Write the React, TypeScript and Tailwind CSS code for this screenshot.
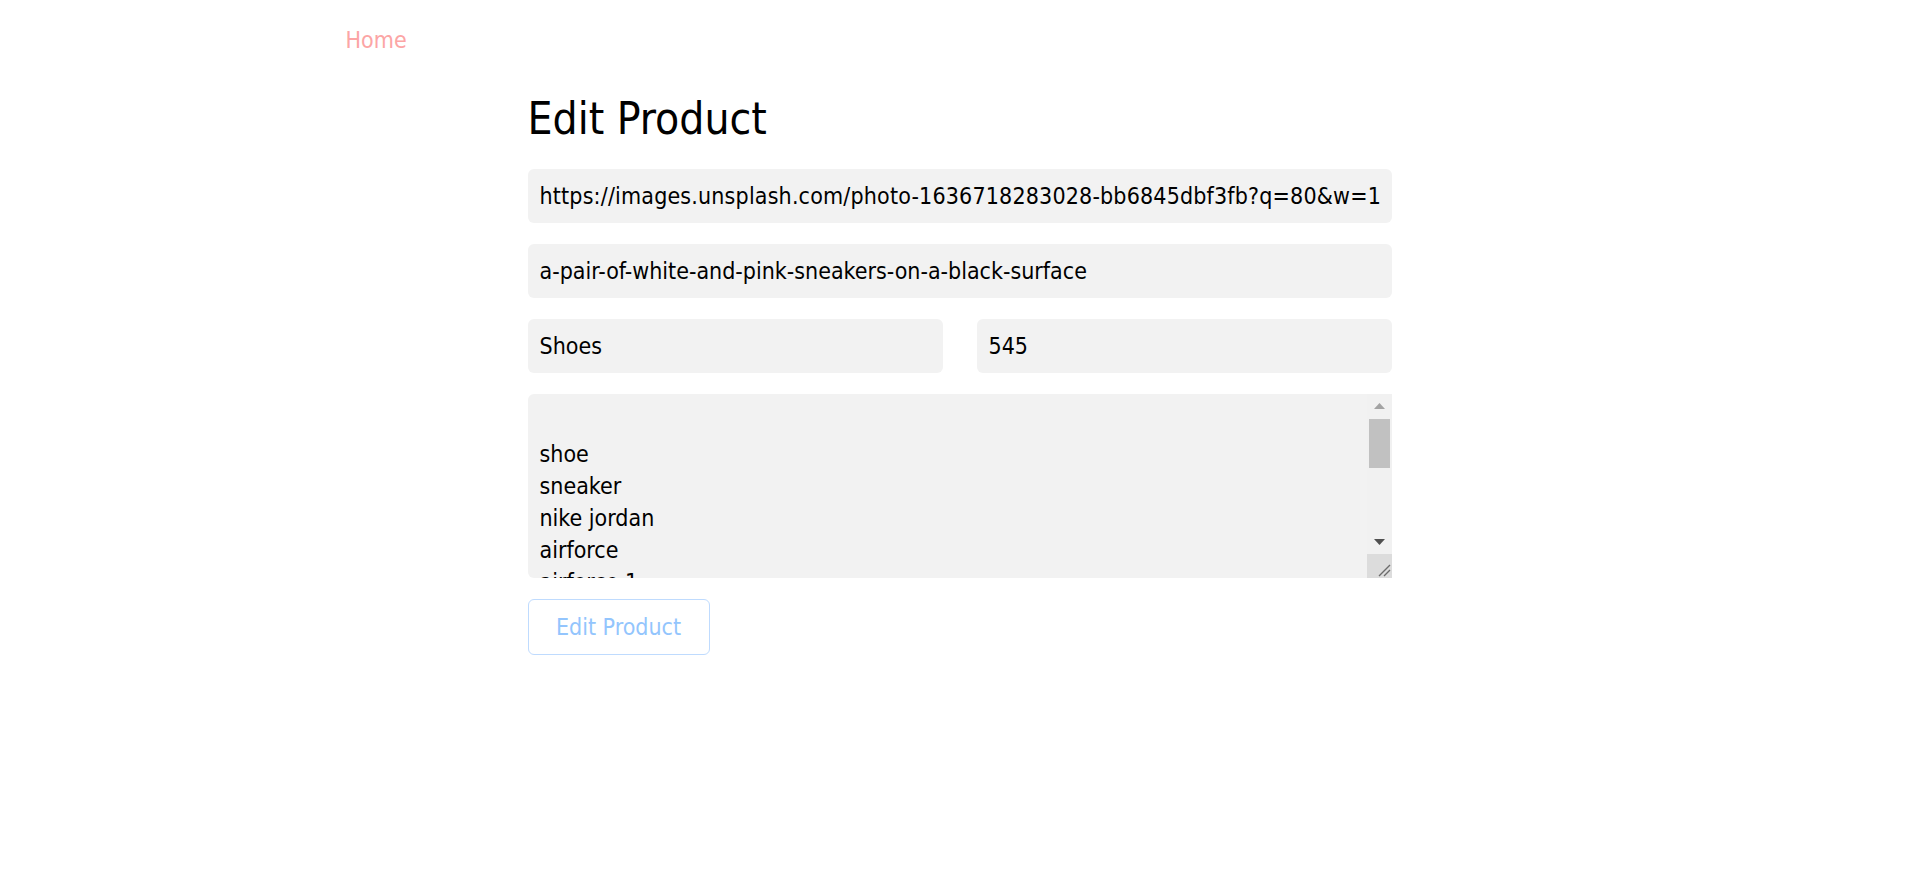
import { useState } from "react";

const tagsText = `
shoe
sneaker
nike jordan
airforce
airforce 1
running shoes
basketball
streetwear
white sneakers
pink sneakers
casual`;

const fieldClass = "h-[54px] w-full rounded-md bg-[#f2f2f2] px-3 text-[23px] outline-none";

// classic scrollbar drawn next to the tags box
const TagsScrollbar = () => (
  <div className="flex w-[25px] flex-col bg-[#f1f1f1]">
    <div className="flex h-[24px] items-center justify-center">
      <svg width="11" height="6" viewBox="0 0 11 6">
        <path d="M5.5 0L11 6H0z" fill="#a3a3a3" />
      </svg>
    </div>
    <div className="flex-1 px-[2px] pt-px">
      <div className="h-[49px] bg-[#c1c1c1]" />
    </div>
    <div className="flex h-[24px] items-center justify-center">
      <svg width="11" height="6" viewBox="0 0 11 6">
        <path d="M0 0H11L5.5 6z" fill="#505050" />
      </svg>
    </div>
    <div className="h-[24px] bg-[#dcdcdc]">
      <svg width="25" height="24" viewBox="0 0 25 24">
        <path d="M23 11L12 22M23 16L17 22" stroke="#6b6b6b" strokeWidth="1.4" />
      </svg>
    </div>
  </div>
);

const App = () => {
  const [image, setImage] = useState(
    "https://images.unsplash.com/photo-1636718283028-bb6845dbf3fb?q=80&w=1"
  );
  const [title, setTitle] = useState("a-pair-of-white-and-pink-sneakers-on-a-black-surface");
  const [category, setCategory] = useState("Shoes");
  const [price, setPrice] = useState("545");
  const [tags, setTags] = useState(tagsText);

  return (
    <div className="min-h-screen bg-white text-black font-['DejaVu_Sans_Condensed','DejaVu_Sans',sans-serif]">
      {/* Nav */}
      <nav className="max-w-7xl mx-auto pl-[26px] pr-6 pt-[24px]">
        <a href="#" className="text-[23px] leading-8 text-[#fca5a5]">
          Home
        </a>
      </nav>

      {/* Form */}
      <main className="max-w-4xl mx-auto px-4 pt-[37px]">
        <h1 className="text-[44px] leading-[52px] mb-[24px]">Edit Product</h1>

        <form className="flex flex-col gap-[21px]" onSubmit={(e) => e.preventDefault()}>
          <input
            value={image}
            onChange={(e) => setImage(e.target.value)}
            className={fieldClass + " tracking-[0.17px]"}
          />
          <input value={title} onChange={(e) => setTitle(e.target.value)} className={fieldClass} />
          <div className="grid grid-cols-2 gap-[34px]">
            <input value={category} onChange={(e) => setCategory(e.target.value)} className={fieldClass} />
            <input value={price} onChange={(e) => setPrice(e.target.value)} className={fieldClass} />
          </div>
          <div className="flex h-[184px]">
            <textarea
              value={tags}
              onChange={(e) => setTags(e.target.value)}
              className="flex-1 resize-none overflow-hidden rounded-l-md bg-[#f2f2f2] px-3 py-[12px] text-[23px] leading-8 outline-none"
            />
            <TagsScrollbar />
          </div>
          <div>
            <button
              type="submit"
              className="w-[182px] h-[56px] rounded-md border border-[#bfdbfe] text-[23px] text-[#93c5fd]"
            >
              Edit Product
            </button>
          </div>
        </form>
      </main>
    </div>
  );
};

export default App;
